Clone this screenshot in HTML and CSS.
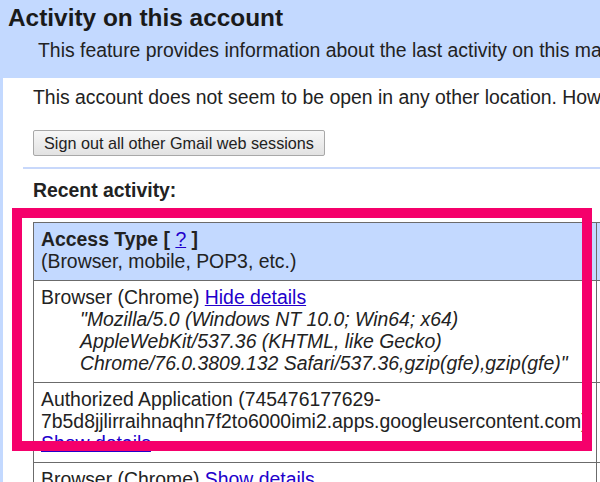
FILE: index.html
```html
<!DOCTYPE html>
<html lang="en">
<head>
<meta charset="utf-8">
<title>Activity on this account</title>
<link rel="stylesheet" href="styles.css">
</head>
<body>
  <header class="top">
    <h1 class="title">Activity on this account</h1>
    <p class="intro">This feature provides information about the last activity on this mail and the IP addresses associated with it.</p>
  </header>

  <main class="panel">
    <p class="status">This account does not seem to be open in any other location. However, there may be sessions that have not been signed out.</p>
    <button class="signout" type="button">Sign out all other Gmail web sessions</button>
    <hr class="rule">
    <h2 class="recent">Recent activity:</h2>

    <table class="activity">
      <thead>
        <tr>
          <th class="col-type"><b>Access Type [ <a href="#" class="link">?</a> ]</b><br><span class="hint">(Browser, mobile, POP3, etc.)</span></th>
          <th class="col-next"></th>
        </tr>
      </thead>
      <tbody>
        <tr>
          <td>Browser (Chrome) <a href="#" class="link">Hide details</a>
            <div class="agent">"Mozilla/5.0 (Windows NT 10.0; Win64; x64) AppleWebKit/537.36 (KHTML, like Gecko) Chrome/76.0.3809.132 Safari/537.36,gzip(gfe),gzip(gfe)"</div>
          </td>
          <td></td>
        </tr>
        <tr>
          <td>Authorized Application (745476177629-7b5d8jjlirraihnaqhn7f2to6000imi2.apps.googleusercontent.com)<br><a href="#" class="link">Show details</a></td>
          <td></td>
        </tr>
        <tr>
          <td>Browser (Chrome) <a href="#" class="link">Show details</a></td>
          <td></td>
        </tr>
      </tbody>
    </table>

    <div class="highlight" aria-hidden="true"></div>
  </main>
</body>
</html>
```

FILE: styles.css
```css
html, body {
  margin: 0;
  padding: 0;
  overflow: hidden;
}

body {
  background: #c3d9ff;
  font-family: "Liberation Sans", Arial, sans-serif;
  color: #222;
  height: 482px;
}

.top {
  padding: 4px 0 16px 8px;
}

.title {
  margin: 0;
  font-size: 24.4px;
  line-height: 28px;
  font-weight: bold;
  color: #1a1a1a;
}

.intro {
  margin: 7px 0 0 30px;
  font-size: 19.4px;
  line-height: 23px;
  white-space: nowrap;
}

.panel {
  position: relative;
  margin-left: 3px;
  background: #fff;
  padding: 8px 0 0 30px;
  height: 420px;
  overflow: hidden;
}

.status {
  margin: 0;
  font-size: 19.4px;
  line-height: 23px;
  white-space: nowrap;
}

.signout {
  display: block;
  margin-top: 21px;
  height: 26px;
  padding: 0 10px;
  font-family: "Liberation Sans", Arial, sans-serif;
  font-size: 16.2px;
  color: #222;
  background: linear-gradient(#f7f7f7, #e2e2e2);
  border: 1px solid #a8a8a8;
  border-radius: 2px;
}

.rule {
  margin: 11px 0 0 -10px;
  border: 0;
  height: 2px;
  background: #c8d8fb;
}

.recent {
  margin: 10px 0 0 0;
  font-size: 19.4px;
  line-height: 23px;
  font-weight: bold;
}

.activity {
  margin-top: 20px;
  border-collapse: collapse;
  table-layout: fixed;
  width: 800px;
  font-size: 19.4px;
  line-height: 22px;
}

.activity th,
.activity td {
  border: 1px solid #6b6b6b;
  padding: 5px 7px 8px 7px;
  text-align: left;
  vertical-align: top;
}

.activity thead th {
  background: #c3d9ff;
  font-weight: normal;
}

.col-type {
  width: 548px;
}

.link {
  color: #2200cc;
  text-decoration: underline;
  font-weight: normal;
}

.agent {
  font-style: italic;
  margin-left: 39px;
}

.highlight {
  position: absolute;
  left: 9px;
  top: 130px;
  width: 560px;
  height: 223px;
  border: 10px solid #f5006b;
  pointer-events: none;
}
```
